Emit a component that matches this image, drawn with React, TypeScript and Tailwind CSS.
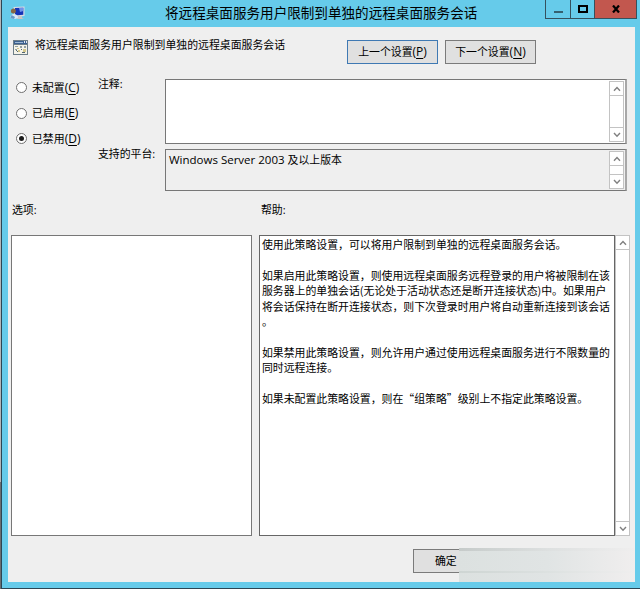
import React from 'react';

const TITLE = '将远程桌面服务用户限制到单独的远程桌面服务会话';

const HELP_LINES = [
  '使用此策略设置，可以将用户限制到单独的远程桌面服务会话。',
  '',
  '如果启用此策略设置，则使用远程桌面服务远程登录的用户将被限制在该',
  '服务器上的单独会话(无论处于活动状态还是断开连接状态)中。如果用户',
  '将会话保持在断开连接状态，则下次登录时用户将自动重新连接到该会话',
  '。',
  '',
  '如果禁用此策略设置，则允许用户通过使用远程桌面服务进行不限数量的',
  '同时远程连接。',
  '',
  '如果未配置此策略设置，则在“组策略”级别上不指定此策略设置。',
];

function Arrow({ down = false }: { down?: boolean }) {
  return (
    <svg width="8" height="6" viewBox="0 0 8 6" fill="none" stroke="#808080" strokeWidth="1.4">
      <path d={down ? 'M1 1L4 4.3L7 1' : 'M1 4.8L4 1.5L7 4.8'} />
    </svg>
  );
}

function ScrollBar({ className = '' }: { className?: string }) {
  return (
    <div className={`flex w-[15px] shrink-0 flex-col justify-between border border-[#c3c3c3] bg-white ${className}`}>
      <div className="flex h-[14px] items-center justify-center border-b border-[#c3c3c3]">
        <Arrow />
      </div>
      <div className="flex h-[14px] items-center justify-center border-t border-[#c3c3c3]">
        <Arrow down />
      </div>
    </div>
  );
}

function Mnemonic({ text, letter }: { text: string; letter: string }) {
  return (
    <span className="whitespace-nowrap">
      {text}
      <span className="text-[12px]">
        (<span className="underline decoration-1 underline-offset-[1.5px]">{letter}</span>)
      </span>
    </span>
  );
}

function Radio({ text, letter, checked = false }: { text: string; letter: string; checked?: boolean }) {
  return (
    <label className="flex h-[25.5px] items-center">
      <span className="flex size-[11px] items-center justify-center rounded-full border border-[#707070] bg-white">
        {checked && <span className="size-[5px] rounded-full bg-[#1c1c1c]" />}
      </span>
      <span className="ml-[5px] leading-[16px]">
        <Mnemonic text={text} letter={letter} />
      </span>
    </label>
  );
}

function RemoteIcon() {
  return (
    <svg width="16" height="15" viewBox="0 0 16 15">
      <path d="M3.5 1L14.5 0.5V10L4 11Z" fill="#d7dce4" />
      <path d="M5 2L13.3 1.7V8.7L5 9.6Z" fill="#1433b8" />
      <path d="M9 2L13.3 1.7V5L10 6Z" fill="#6f93ea" />
      <path d="M8 10H12V12L14 13H7Z" fill="#c9c5c4" />
      <circle cx="3.4" cy="5" r="2.5" fill="#8a6845" />
      <path d="M0.5 12C0.5 9 2 8 4 8S8 9 8 12L5 13Z" fill="#d8e7f5" />
      <path d="M1.5 9L5 11L4 13L0.5 12Z" fill="#6698c9" />
    </svg>
  );
}

function PolicyIcon() {
  return (
    <svg width="15" height="15" viewBox="0 0 15 15" shapeRendering="crispEdges">
      <path d="M0 0H15V15H0Z" fill="#6d7e88" />
      <path d="M1 1H14V4H1Z" fill="#3d6190" />
      <path d="M2 2H10V3H2Z" fill="#9db9d5" />
      <path d="M11 1H12V3H11ZM13 1H14V3H13Z" fill="#e0e7ed" />
      <path d="M1 5H14V14H1Z" fill="#f4f3e9" />
      <path d="M2 6H5V7H2ZM7 6H9V8H7ZM11 6H13V8H11ZM2 9H4V10H2Z" fill="#93a0a2" />
      <path d="M4 8H6V9H4ZM5 10H7V12H5ZM10 9H13V12H10Z" fill="#d3c68c" />
      <path d="M3 10H4V11H3ZM4 11H5V12H4ZM8 9H9V10H8ZM9 12H12V13H9Z" fill="#536874" />
    </svg>
  );
}

export default function App() {
  return (
    <div className="flex h-[589px] w-[640px] overflow-hidden font-['Open_Sans','Noto_Sans_CJK_SC',sans-serif] text-[10.88px] text-black">
      <div className="flex w-px flex-col">
        <div className="h-[482px] bg-[#b5b7b9]" />
        <div className="grow bg-[#6b6d70]" />
      </div>
      <div className="flex grow flex-col border-b border-l border-[#2c4654] bg-[#66cbea]">
        <header className="flex h-[27px] items-start">
          <div className="ml-[8px] mt-[6px] w-[16px]">
            <RemoteIcon />
          </div>
          <h1 className="ml-[139px] mt-[2px] w-[330px] whitespace-nowrap font-['Noto_Sans_CJK_SC',sans-serif] text-[13.58px] leading-[20px]">
            {TITLE}
          </h1>
          <div className="ml-[50px] flex h-[19px] border-x border-b border-[#35515e]">
            <div className="flex w-[25px] items-center justify-center border-r border-[#35515e]">
              <span className="mt-[5px] h-[2px] w-[9px] bg-[#35606f]" />
            </div>
            <div className="flex w-[24px] items-center justify-center border-r border-[#35515e]">
              <span className="h-[8px] w-[10px] border-2 border-black" />
            </div>
            <div className="flex w-[41px] items-center justify-center bg-[#c2574e]">
              <svg width="8" height="8" viewBox="0 0 8 8" stroke="#000" strokeWidth="2.2">
                <path d="M1 0.5L7 7.5M7 0.5L1 7.5" />
              </svg>
            </div>
          </div>
        </header>

        <main className="ml-[6px] flex h-[555px] w-[627px] flex-col bg-[#efefef]">
          <div className="flex h-[52px]">
            <div className="ml-[5px] mt-[13px] w-[22px]">
              <PolicyIcon />
            </div>
            <div className="mt-[10px] w-[312px] whitespace-nowrap leading-[16px]">{TITLE}</div>
            <button className="mt-[13px] h-[24px] w-[91px] border border-[#3f79b3] bg-[#e0e0e0] leading-[22px]">
              <Mnemonic text="上一个设置" letter="P" />
            </button>
            <button className="ml-[7px] mt-[13px] h-[24px] w-[91px] border border-[#7b7b7b] bg-[#e0e0e0] leading-[22px]">
              <Mnemonic text="下一个设置" letter="N" />
            </button>
          </div>

          <div className="flex h-[112px]">
            <div className="ml-[8px] flex w-[82px] flex-col">
              <div className="-mt-[4px]">
                <Radio text="未配置" letter="C" />
                <Radio text="已启用" letter="E" />
                <Radio text="已禁用" letter="D" checked />
              </div>
            </div>
            <div className="flex w-[67px] flex-col leading-[16px]">
              <div className="-mt-[3px] h-[70px]">注释:</div>
              <div>支持的平台:</div>
            </div>
            <div className="flex w-[462px] flex-col gap-[5px]">
              <div className="flex h-[65px] justify-end border-2 border-[#a8a8a8] border-l-[#777] border-t-[#777] bg-white [border-bottom-color:#777] [border-bottom-width:1px] [border-left-width:1px] [border-top-width:1px]">
                <ScrollBar className="mt-px mb-px mr-px" />
              </div>
              <div className="flex h-[42px] justify-between border-2 border-[#a8a8a8] border-l-[#777] border-t-[#777] [border-bottom-color:#777] [border-bottom-width:1px] [border-left-width:1px] [border-top-width:1px]">
                <span className="ml-[3px] mt-[2px] text-[11.5px] leading-[16px]">
                  Windows Server 2003 <span className="text-[10.88px]">及以上版本</span>
                </span>
                <ScrollBar className="mt-px mb-px mr-px" />
              </div>
            </div>
          </div>

          <div className="flex h-[44px] pt-[11px] leading-[16px]">
            <div className="ml-[4px] w-[249px]">选项:</div>
            <div>帮助:</div>
          </div>

          <div className="flex h-[301px]">
            <div className="ml-[3px] w-[241px] border border-[#777] bg-white" />
            <div className="ml-[7px] w-[356px] whitespace-nowrap border border-[#666] bg-white pl-[2px] pt-[1px] font-['Noto_Sans_CJK_SC',sans-serif] leading-[15.4px]">
              {HELP_LINES.map((line, i) => (
                <div key={i} className="h-[15.4px]">
                  {line}
                </div>
              ))}
            </div>
            <ScrollBar />
          </div>

          <div className="flex grow items-start">
            <div className="ml-[405px] mt-[13px] h-[24px] w-[46px] border border-r-0 border-[#7b7b7b] bg-[#e0e0e0] pl-[21px] leading-[22px]">
              确定
            </div>
            <div className="mt-[12px] flex h-[34px] grow flex-col bg-linear-to-r from-[#dce1e0] via-[#e0e4e4] to-[#f0eeee]">
              <div className="h-[3px] bg-linear-to-r from-[#c6cbca] via-[#dde0e0] to-[#efeeee]" />
              <div className="h-[20px]" />
              <div className="h-[2px] bg-linear-to-r from-[#ced5d3] via-[#dce1e0] to-[#efeeee]" />
            </div>
          </div>
        </main>
      </div>
    </div>
  );
}
